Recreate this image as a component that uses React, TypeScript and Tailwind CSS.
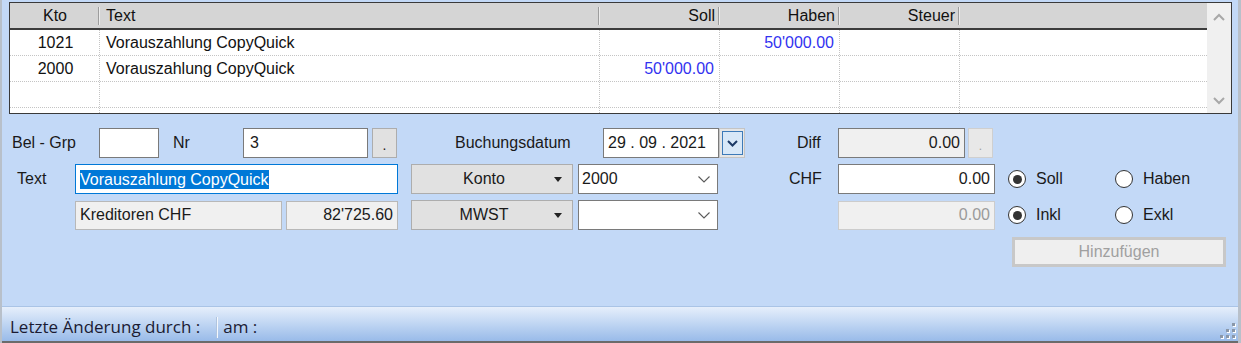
import React from "react";

const rows = [
  { kto: "1021", text: "Vorauszahlung CopyQuick", soll: "", haben: "50'000.00" },
  { kto: "2000", text: "Vorauszahlung CopyQuick", soll: "50'000.00", haben: "" },
  { kto: "", text: "", soll: "", haben: "" },
  { kto: "", text: "", soll: "", haben: "" },
];

function HeadSep() {
  return <span className="w-[2px] h-[18px] border-l border-[#9d9d9d] bg-[#ececec] shrink-0" />;
}

function Chevron({ up }: { up?: boolean }) {
  return (
    <svg width="12" height="8" viewBox="0 0 12 8">
      <path d={up ? "M1 7 L6 2 L11 7" : "M1 1 L6 6 L11 1"} stroke="#a8a8a8" strokeWidth="2" fill="none" />
    </svg>
  );
}

function Grid() {
  return (
    <div className="h-[112px] border border-[#3a3a3a] bg-white flex overflow-hidden">
      <div className="w-[1197px] flex flex-col shrink-0">
        <div className="h-[27px] shrink-0 bg-[#d5d5d5] border-b-2 border-[#3c3c3c] flex items-center">
          <div className="w-[90px] flex items-center">
            <span className="flex-1 text-center pl-[2px]">Kto</span>
            <HeadSep />
          </div>
          <div className="w-[500px] flex items-center">
            <span className="flex-1 pl-[6px]">Text</span>
            <HeadSep />
          </div>
          <div className="w-[120px] flex items-center">
            <span className="flex-1 text-right pr-[3px]">Soll</span>
            <HeadSep />
          </div>
          <div className="w-[120px] flex items-center">
            <span className="flex-1 text-right pr-[3px]">Haben</span>
            <HeadSep />
          </div>
          <div className="w-[120px] flex items-center">
            <span className="flex-1 text-right pr-[3px]">Steuer</span>
            <HeadSep />
          </div>
          <div className="flex-1" />
        </div>
        {rows.map((r, i) => (
          <div key={i} className="h-[26px] shrink-0 flex border-b border-dotted border-[#c4c4c4]">
            <div className="w-[90px] flex items-center justify-center pl-[2px] border-r border-dotted border-[#c4c4c4]">{r.kto}</div>
            <div className="w-[500px] flex items-center pl-[6px] border-r border-dotted border-[#c4c4c4]">{r.text}</div>
            <div className="w-[120px] flex items-center justify-end pr-[5px] text-[#3232f0] border-r border-dotted border-[#c4c4c4]">{r.soll}</div>
            <div className="w-[120px] flex items-center justify-end pr-[5px] text-[#3232f0] border-r border-dotted border-[#c4c4c4]">{r.haben}</div>
            <div className="w-[120px] flex items-center justify-end pr-[5px] border-r border-dotted border-[#c4c4c4]"></div>
            <div className="flex-1" />
          </div>
        ))}
      </div>
      <div className="flex-1 bg-[#f0f0f0] flex flex-col justify-between items-center pt-[10px] pb-[8px]">
        <Chevron up />
        <Chevron />
      </div>
    </div>
  );
}

function ComboChevron() {
  return (
    <svg width="12" height="7" viewBox="0 0 12 7">
      <path d="M0.5 0.5 L6 6 L11.5 0.5" stroke="#5a5a5a" strokeWidth="1.1" fill="none" />
    </svg>
  );
}

function Tri() {
  return (
    <svg width="8" height="5" viewBox="0 0 8 5">
      <polygon points="0,0 8,0 4,5" fill="#222" />
    </svg>
  );
}

function DropBtn({ label }: { label: string }) {
  return (
    <div className="ml-[13px] w-[162px] h-[30px] bg-[#e1e1e1] border border-[#adadad] flex items-center">
      <span className="flex-1 text-center pl-[8px]">{label}</span>
      <span className="w-[20px] flex justify-center mr-[4px]">
        <Tri />
      </span>
    </div>
  );
}

function Combo({ value }: { value: string }) {
  return (
    <div className="ml-[5px] w-[140px] h-[30px] bg-white border border-[#7a7a7a] flex items-center pl-[3px] pr-[7px]">
      <span className="flex-1">{value}</span>
      <ComboChevron />
    </div>
  );
}

function Radio({ checked, label }: { checked?: boolean; label: string }) {
  return (
    <div className="w-[107px] flex items-center">
      <span className="w-[18px] h-[18px] rounded-full border border-[#333] bg-white flex items-center justify-center shrink-0">
        {checked && <span className="w-[9px] h-[9px] rounded-full bg-[#333]" />}
      </span>
      <span className="ml-[10px]">{label}</span>
    </div>
  );
}

function Form() {
  return (
    <div className="flex-1 pt-[14px] pl-[10px] pr-[12px] flex flex-col text-[#1a1a1a]">
      {/* Row 1 */}
      <div className="h-[30px] flex items-center">
        <div className="w-[87px]">Bel - Grp</div>
        <div className="w-[60px] h-[30px] bg-white border border-[#7a7a7a]" />
        <div className="w-[84px] pl-[14px]">Nr</div>
        <div className="w-[125px] h-[30px] bg-white border border-[#7a7a7a] flex items-center pl-[6px]">3</div>
        <div className="ml-[4px] w-[25px] h-[30px] bg-[#e1e1e1] border border-[#adadad] flex items-end justify-center pb-[5px] text-[14px] leading-none">.</div>
        <div className="w-[206px] pl-[58px]">Buchungsdatum</div>
        <div className="w-[116px] h-[30px] bg-white border border-[#7a7a7a] flex items-center pl-[4px]">29 . 09 . 2021</div>
        <div className="w-[26px] h-[30px] bg-[#e6e6e6] border border-[#c4c4c4] flex items-center justify-center">
          <div className="w-[21px] h-[24px] bg-[#d8e8f8] border border-[#3d7ab8] flex items-center justify-center">
            <svg width="11" height="7" viewBox="0 0 11 7">
              <path d="M1 1 L5.5 5.5 L10 1" stroke="#1c3a66" strokeWidth="2" fill="none" />
            </svg>
          </div>
        </div>
        <div className="w-[93px] pl-[52px]">Diff</div>
        <div className="w-[127px] h-[30px] bg-[#f0f0f0] border border-[#7a7a7a] flex items-center justify-end pr-[4px]">0.00</div>
        <div className="ml-[3px] w-[25px] h-[30px] bg-[#e8e8e8] border border-[#cfcfcf] flex items-end justify-center pb-[5px] text-[12px] leading-none text-[#a0a0a0]">.</div>
      </div>
      {/* Row 2 */}
      <div className="mt-[6px] h-[30px] flex items-center">
        <div className="w-[63px] pl-[5px]">Text</div>
        <div className="w-[323px] h-[30px] bg-white border border-[#0078d7] flex items-center pl-[4px]">
          <span className="bg-[#0078d7] text-white leading-[19px]">Vorauszahlung CopyQuick</span>
        </div>
        <DropBtn label="Konto" />
        <Combo value="2000" />
        <div className="w-[120px] pl-[71px]">CHF</div>
        <div className="w-[157px] h-[30px] bg-white border border-[#7a7a7a] flex items-center justify-end pr-[4px]">0.00</div>
        <div className="ml-[13px] flex items-center">
          <Radio checked label="Soll" />
          <Radio label="Haben" />
        </div>
      </div>
      {/* Row 3 */}
      <div className="mt-[6px] h-[30px] flex items-center">
        <div className="w-[63px]" />
        <div className="w-[207px] h-[29px] bg-[#f0f0f0] border border-[#b8b8b8] flex items-center pl-[4px]">Kreditoren CHF</div>
        <div className="ml-[4px] w-[112px] h-[29px] bg-[#f0f0f0] border border-[#b8b8b8] flex items-center justify-end pr-[4px]">82'725.60</div>
        <DropBtn label="MWST" />
        <Combo value="" />
        <div className="w-[120px]" />
        <div className="w-[157px] h-[29px] bg-[#f0f0f0] border border-[#cccccc] flex items-center justify-end pr-[4px] text-[#9a9a9a]">0.00</div>
        <div className="ml-[13px] flex items-center">
          <Radio checked label="Inkl" />
          <Radio label="Exkl" />
        </div>
      </div>
      {/* Row 4 */}
      <div className="mt-[7px] flex justify-end">
        <div className="w-[214px] h-[30px] bg-[#efefef] border-[3px] border-[#c8c8c8] flex items-center justify-center text-[#a0a0a0]">
          Hinzufügen
        </div>
      </div>
    </div>
  );
}

function Grip() {
  const dots = [
    [12, 0],
    [6, 6],
    [12, 6],
    [0, 12],
    [6, 12],
    [12, 12],
  ];
  return (
    <svg width="16" height="16" viewBox="0 0 16 16">
      {dots.map(([x, y], i) => (
        <g key={i}>
          <rect x={x + 1} y={y + 1} width="3" height="3" fill="#ffffff" />
          <rect x={x} y={y} width="3" height="3" fill="#8a97a8" />
        </g>
      ))}
    </svg>
  );
}

function StatusBar() {
  return (
    <div className="h-[35px] shrink-0 border-t border-[#aac4e6] bg-gradient-to-b from-[#e6effb] to-[#99bbe9] flex items-center pt-[6px] pl-[8px] pr-[2px] font-['Open_Sans',sans-serif] text-[17px] text-[#1b1b33]">
      <span>Letzte Änderung durch :</span>
      <span className="ml-[16px] w-[2px] h-[21px] border-l border-[#b0c4de] bg-[#f4f8fd]" />
      <span className="ml-[5px]">am :</span>
      <span className="flex-1" />
      <span className="self-end mb-[2px]">
        <Grip />
      </span>
    </div>
  );
}

export default function App() {
  return (
    <div className="w-[1241px] h-[343px] overflow-hidden bg-[#c3d9f7] flex flex-col border-l-[2px] border-r-[3px] border-[#b8c0ca] font-['Liberation_Sans',Arial,sans-serif] text-[16px] text-[#111]">
      <div className="pt-[2px] pl-[7px] pr-[6px] shrink-0">
        <Grid />
      </div>
      <Form />
      <StatusBar />
      <div className="h-[2px] shrink-0 bg-[#6b6b6b]" />
    </div>
  );
}
